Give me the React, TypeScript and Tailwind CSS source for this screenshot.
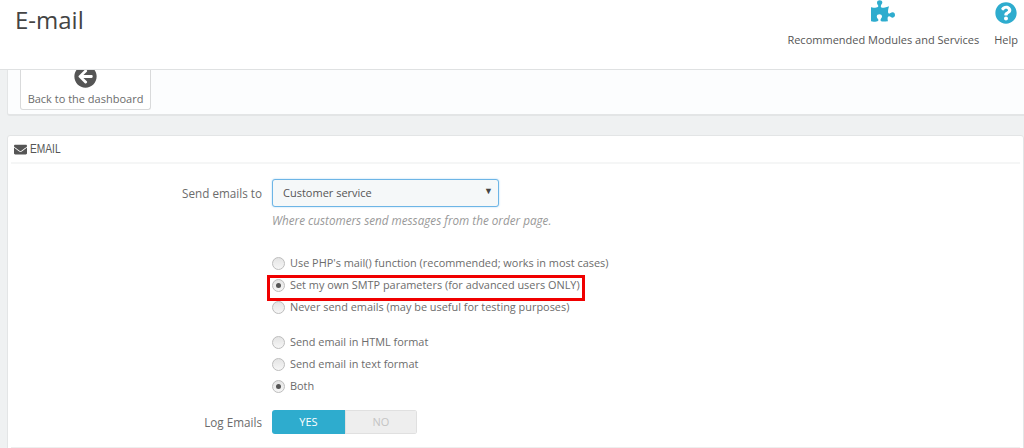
import { FaArrowCircleLeft, FaEnvelope, FaPuzzlePiece, FaQuestionCircle } from 'react-icons/fa';

function Radio({ checked = false }: { checked?: boolean }) {
  return (
    <span className="w-[13px] h-[13px] rounded-full border border-[#bdbdbd] bg-gradient-to-b from-[#e4e4e4] to-[#f6f6f6] flex items-center justify-center shrink-0">
      {checked && <span className="w-[5px] h-[5px] rounded-full bg-[#555]" />}
    </span>
  );
}

function Option({ label, checked }: { label: string; checked?: boolean }) {
  return (
    <div className="flex items-center gap-[5px] h-[22px] text-[10.92px]">
      <Radio checked={checked} />
      <span className="whitespace-nowrap">{label}</span>
    </div>
  );
}

export default function App() {
  return (
    <div className="w-[1024px] h-[448px] overflow-hidden bg-[#eff1f2] text-[11px] text-[#6c6c6c] font-['Open_Sans',sans-serif]">
      <header className="h-[70px] bg-white border-b border-[#dfe1e2] flex justify-between pl-[15px] pr-[6px]">
        <h1 className="text-[24px] leading-[34px] mt-[3px] text-[#444]">E-mail</h1>
        <div className="flex gap-[15px] text-[#555]">
          <div className="flex flex-col items-center">
            <FaPuzzlePiece className="w-[24px] h-[24px] -mt-[1px] text-[#2eacce]" />
            <span className="mt-[10px] leading-[14px]">Recommended Modules and Services</span>
          </div>
          <div className="flex flex-col items-center">
            <FaQuestionCircle className="w-[22px] h-[22px] mt-[2px] text-[#2eacce]" />
            <span className="mt-[9px] leading-[14px]">Help</span>
          </div>
        </div>
      </header>

      <div className="ml-[7px] h-[46px] bg-[#fcfdfe] border-b-2 border-l border-[#e3e5e6] pl-[12px] rounded-bl-[3px]">
        <div className="w-[131px] h-[40px] bg-white border border-t-0 border-[#d9dadb] rounded-b-[3px] flex flex-col items-center overflow-hidden">
          <FaArrowCircleLeft className="w-[23px] h-[23px] -mt-[5px] shrink-0 text-[#555]" />
          <span className="leading-[14px] mt-[4px] whitespace-nowrap">Back to the dashboard</span>
        </div>
      </div>

      <section className="mt-[19px] ml-[7px] h-[320px] bg-white border border-[#e3e5e6] rounded-[3px] px-[3px]">
        <div className="h-[28px] border-b-2 border-[#f5f6f6] flex items-center gap-[3px] pl-[3px]">
          <FaEnvelope className="w-[13px] h-[13px] text-[#555]" />
          <span className="font-['Liberation_Sans_Narrow','Liberation_Sans',sans-serif] text-[12px] text-[#555] scale-x-[.85] origin-left">EMAIL</span>
        </div>

        <div className="pt-[15px] grid grid-cols-[251px_auto] justify-start gap-x-[10px]">
          <div className="text-right leading-[28px] text-[11.7px]">Send emails to</div>
          <div>
            <div className="w-[227px] h-[28px] bg-[#f5f8f9] border border-[#6db5e6] shadow-[0_0_2px_#a9d5f2] rounded-[3px] flex items-center justify-between pl-[10px] pr-[5px]">
              <span className="text-[#555]">Customer service</span>
              <span className="text-[9px] leading-[9px] -mt-[5px] text-[#444]">▼</span>
            </div>
            <p className="italic text-[11.7px] text-[#999] leading-[14px] mt-[6px] whitespace-nowrap">Where customers send messages from the order page.</p>
          </div>

          <div />
          <div className="mt-[25px]">
            <Option label="Use PHP's mail() function (recommended; works in most cases)" />
            <div className="relative">
              <Option label="Set my own SMTP parameters (for advanced users ONLY)" checked />
              <div className="absolute left-[-5px] top-[1px] w-[318px] h-[26px] border-[3px] border-[#f00000]" />
            </div>
            <Option label="Never send emails (may be useful for testing purposes)" />
          </div>

          <div />
          <div className="mt-[13px]">
            <Option label="Send email in HTML format" />
            <Option label="Send email in text format" />
            <Option label="Both" checked />
          </div>

          <div className="text-right leading-[24px] text-[11.7px] mt-[13px]">Log Emails</div>
          <div className="mt-[13px] w-[145px] h-[24px] flex rounded-[3px] overflow-hidden font-medium">
            <span className="w-[73px] bg-[#2eacce] text-white flex items-center justify-center">YES</span>
            <span className="w-[72px] bg-[#eeeeee] text-[#c4c4c4] border border-[#e0e0e0] flex items-center justify-center">NO</span>
          </div>
        </div>
        <div className="mt-[13px] border-t border-[#eeeeee]" />
      </section>
    </div>
  );
}
